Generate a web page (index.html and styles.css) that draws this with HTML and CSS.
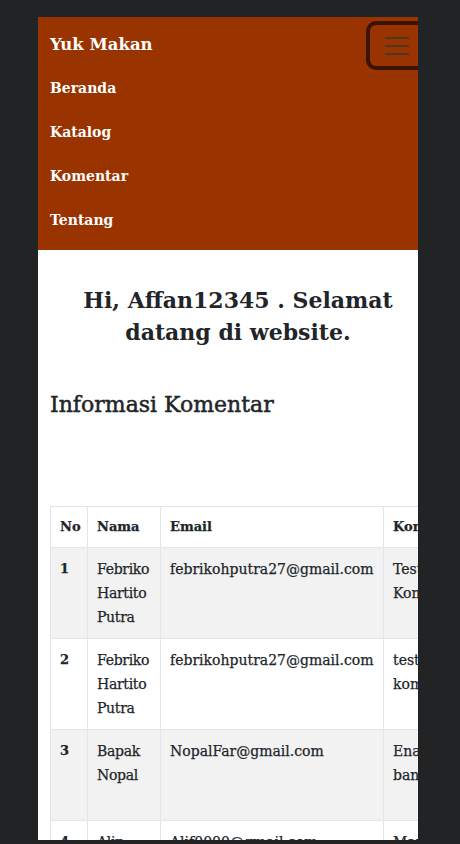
FILE: index.html
```html
<!DOCTYPE html>
<html lang="id">
<head>
<meta charset="utf-8">
<title>Yuk Makan</title>
<link rel="stylesheet" href="styles.css">
</head>
<body>
<div class="frame">
  <div class="page">
    <header class="navbar">
      <div class="nav-top">
        <span class="brand">Yuk Makan</span>
        <button class="toggler" aria-label="menu">
          <svg width="24" height="18" viewBox="0 0 24 18"><path d="M0 1H24M0 9H24M0 17H24" stroke="#4e3527" stroke-width="2"/></svg>
        </button>
      </div>
      <ul class="nav-list">
        <li>Beranda</li>
        <li>Katalog</li>
        <li>Komentar</li>
        <li>Tentang</li>
      </ul>
    </header>
    <main class="content">
      <h1 class="greet">Hi, <span class="user">Affan12345</span> . Selamat datang di website.</h1>
      <h2 class="section-title">Informasi Komentar</h2>
      <table class="tbl">
        <colgroup><col class="c-no"><col class="c-nama"><col class="c-email"><col class="c-kom"></colgroup>
        <thead>
          <tr><th>No</th><th>Nama</th><th>Email</th><th>Komentar</th></tr>
        </thead>
        <tbody>
          <tr><td>1</td><td>Febriko Hartito Putra</td><td>febrikohputra27@gmail.com</td><td>Test Komentar</td></tr>
          <tr><td>2</td><td>Febriko Hartito Putra</td><td>febrikohputra27@gmail.com</td><td>test komentar</td></tr>
          <tr><td>3</td><td>Bapak Nopal</td><td>NopalFar@gmail.com</td><td>Enak banget</td></tr>
          <tr><td>4</td><td>Alip Alip</td><td>Alif0000@gmail.com</td><td>Mantap sekali</td></tr>
        </tbody>
      </table>
    </main>
  </div>
</div>
</body>
</html>
```
FILE: styles.css
```css
html, body {
  margin: 0;
  padding: 0;
  background: #222325;
  height: 100%;
  overflow: hidden;
}
.frame {
  margin: 17px 0 0 38px;
  width: 380px;
  height: 823px;
  overflow: hidden;
  background: #ffffff;
}
.page {
  width: 400px;
  font-family: "DejaVu Serif", "Liberation Serif", serif;
  color: #212529;
}
.navbar {
  background: #993300;
  padding: 0 10px 8px 12px;
}
.nav-top {
  display: flex;
  justify-content: space-between;
  align-items: flex-start;
  height: 49px;
}
.brand {
  margin-top: 15px;
  line-height: 26px;
  font-size: 16.5px;
  font-weight: bold;
  color: #ffffff;
}
.toggler {
  margin-top: 4px;
  width: 62px;
  height: 49px;
  box-sizing: border-box;
  border: 4px solid #3b1300;
  border-radius: 10px;
  background: transparent;
  padding: 0;
  display: flex;
  align-items: center;
  justify-content: center;
}
.nav-list {
  list-style: none;
  margin: 0;
  padding: 0;
}
.nav-list li {
  height: 44px;
  line-height: 44px;
  font-size: 14px;
  font-weight: bold;
  color: #ffffff;
}
.content {
  padding: 0 12px;
}
.greet {
  margin: 34px 0 0;
  padding: 0 14px;
  text-align: center;
  font-size: 22px;
  line-height: 32px;
  font-weight: bold;
}
.section-title {
  margin: 43px 0 0;
  font-size: 22px;
  line-height: 28px;
  font-weight: normal;
  -webkit-text-stroke: 0.5px #212529;
}
.tbl {
  margin-top: 87px;
  border-collapse: collapse;
  table-layout: fixed;
  width: 413px;
  font-size: 14px;
}
.c-no { width: 37px; }
.c-nama { width: 73px; }
.c-email { width: 223px; }
.c-kom { width: 80px; }
.tbl th, .tbl td {
  border: 1px solid #e3e5e8;
  padding: 9px 8px 9px 9px;
  text-align: left;
  vertical-align: top;
  line-height: 24px;
  -webkit-text-stroke: 0.25px #212529;
}
.tbl th {
  font-size: 13px;
  font-weight: bold;
  padding-top: 8px;
  padding-bottom: 8px;
}
.tbl tbody tr {
  height: 91px;
}
.tbl td:nth-child(2) {
  letter-spacing: -0.3px;
}
.tbl td:nth-child(3) {
  white-space: nowrap;
}
.tbl tbody tr:nth-child(odd) {
  background: #f2f2f2;
}
.tbl td:first-child {
  font-weight: bold;
  font-size: 13px;
}
```
